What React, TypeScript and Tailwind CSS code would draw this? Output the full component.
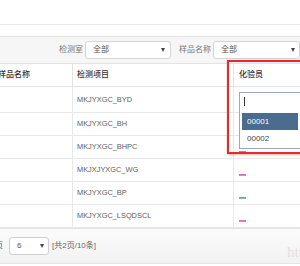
import React from 'react';

const rows = [
  { code: 'MKJYXGC_BYD', tall: true },
  { code: 'MKJYXGC_BH' },
  { code: 'MKJYXGC_BHPC' },
  { code: 'MKJXJYXGC_WG' },
  { code: 'MKJYXGC_BP' },
  { code: 'MKJYXGC_LSQDSCL' },
];

function Caret() {
  return <span className="w-0 h-0 border-l-[2.5px] border-r-[2.5px] border-t-[4px] border-l-transparent border-r-transparent border-t-[#444]" />;
}

function Dash() {
  return (
    <div className="w-[7px]">
      <div className="h-[1px] bg-[#d9739f]" />
      <div className="h-[1px] bg-[#86acd8]" />
    </div>
  );
}

export default function App() {
  return (
    <div className="relative w-[300px] h-[266px] overflow-hidden bg-white font-['Liberation_Sans','Noto_Sans_CJK_SC',sans-serif] text-[8px] text-[#555]">
      <div className="h-[25px] border-b border-[#e6e6e6]" />
      <div className="h-[11px]" />

      {/* filter bar */}
      <div className="h-[27px] flex items-center pl-[59px] bg-[#f6f6f6] border-t border-[#e2e2e2]">
        <span className="text-[#777] whitespace-nowrap">检测室</span>
        <div className="ml-[2px] w-[88px] h-[18px] flex items-center justify-between pl-[7px] pr-[5px] bg-white border border-[#d4d4d4] rounded-[3px]">
          <span>全部</span>
          <Caret />
        </div>
        <span className="ml-[8px] text-[#777] whitespace-nowrap">样品名称</span>
        <div className="ml-[2px] w-[87px] h-[18px] shrink-0 flex items-center justify-between pl-[7px] pr-[4px] bg-white border border-[#d4d4d4] rounded-[3px]">
          <span>全部</span>
          <Caret />
        </div>
      </div>

      {/* table */}
      <div className="-ml-[7px] w-[320px]">
        <div className="h-[24px] flex border-y border-[#e3e3e3] text-[#333] font-medium">
          <div className="w-[80px] pl-[5px] flex items-center border-r border-[#e3e3e3] whitespace-nowrap">样品名称</div>
          <div className="w-[161px] pl-[4px] flex items-center border-r border-[#e3e3e3]">检测项目</div>
          <div className="flex-1 pl-[5px] flex items-center">化验员</div>
        </div>
        {rows.map((r, i) => (
          <div key={r.code} className={`${r.tall ? 'h-[26px]' : 'h-[23px]'} flex border-b border-[#e8e8e8]`}>
            <div className="w-[80px] border-r border-[#e8e8e8]" />
            <div className="w-[161px] pl-[4px] flex items-center border-r border-[#e8e8e8] text-[7.4px] text-[#606060]">{r.code}</div>
            <div className="flex-1 pl-[5px] flex items-end pb-[5px]">{i > 0 && <Dash />}</div>
          </div>
        ))}
      </div>

      {/* footer */}
      <div className="h-[36px] flex items-center bg-gradient-to-b from-[#fbfbfb] to-[#f2f2f2] border-t border-b border-[#e4e4e4]">
        <span className="-ml-[5px] text-[#666]">页</span>
        <div className="ml-[6px] w-[40px] h-[18px] flex items-center justify-between pl-[7px] pr-[4px] bg-white border border-[#d0d0d0] rounded-[3px]">
          <span>6</span>
          <Caret />
        </div>
        <span className="ml-[3px] text-[#666] whitespace-nowrap">[共2页/10条]</span>
      </div>

      {/* annotation box */}
      <div className="absolute left-[227px] top-[60px] w-[80px] h-[94px] border-2 border-[#e5292c] shadow-[0_1px_2px_rgba(220,40,40,0.35)]" />

      {/* open dropdown */}
      <div className="absolute left-[239px] top-[92px] w-[62px] h-[57px] bg-white border border-[#98a9bc]">
        <div className="h-[20px] pl-[4px] pt-[4px]">
          <div className="w-[1px] h-[9px] bg-[#333]" />
        </div>
        <div className="ml-[2px] mr-[2px] h-[17px] flex items-center pl-[5px] bg-[#4b6b8f] text-white">00001</div>
        <div className="ml-[2px] h-[17px] flex items-center pl-[5px] text-[#444]">00002</div>
      </div>

      <div className="absolute left-[287px] top-[241px] font-['Liberation_Serif',serif] text-[15px] text-[#e0e0e0] whitespace-nowrap">http</div>
    </div>
  );
}
